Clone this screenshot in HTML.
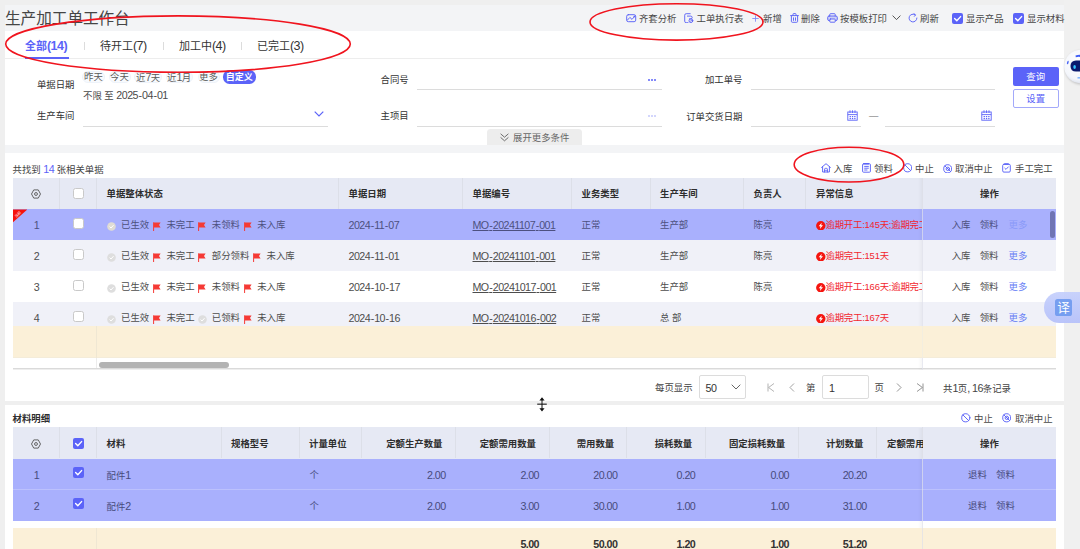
<!DOCTYPE html>
<html lang="zh-CN"><head><meta charset="utf-8"><title>生产加工单工作台</title>
<style>
*{margin:0;padding:0;box-sizing:border-box}
html,body{width:1080px;height:549px;overflow:hidden;background:#efefef}
body{position:relative;font-family:"Liberation Sans","Noto Sans CJK SC",sans-serif;font-size:9.4px;color:#484848}
.b{position:absolute;display:block}
.t{position:absolute;white-space:nowrap;line-height:14px;height:14px}
.t.c{transform:translateX(-50%)}
.bd{font-weight:bold}
.blue{color:#5b63f8}
.red{color:#f2262e}
.l{font-size:1.14em;letter-spacing:-0.56px;position:relative;top:-0.1px}.hy{margin:0 .55px}
.u{text-decoration:underline}
.h{font-weight:bold;color:#2e2e2e}
</style></head>
<body>
<div class="b " style="left:4.5px;top:4.5px;width:1059.5px;height:396.5px;background:#f3f4f6"></div>
<div class="b " style="left:1064px;top:0px;width:16px;height:549px;background:#f0f0f0"></div>
<div class="b " style="left:5px;top:31px;width:1059px;height:114px;background:#fff"></div>
<div class="b " style="left:5px;top:58px;width:1059px;height:1px;background:#ededed"></div>
<div class="b " style="left:5px;top:152.5px;width:1059px;height:248.5px;background:#fff"></div>
<div class="b " style="left:5px;top:405.2px;width:1059px;height:145px;background:#fff"></div>
<span class="t" style="left:5px;top:8px;font-size:15.6px;line-height:22px;height:22px;color:#454545">生产加工单工作台</span>
<span class="t bd blue" style="left:25px;top:39.4px;font-size:11px">全部<span class="l">(14)</span></span>
<div class="b " style="left:25.3px;top:56.6px;width:43.5px;height:2.2px;background:#5b63f8"></div>
<div class="b " style="left:84px;top:42px;width:1px;height:8px;background:#dcdcdc"></div>
<div class="b " style="left:163px;top:42px;width:1px;height:8px;background:#dcdcdc"></div>
<div class="b " style="left:241px;top:42px;width:1px;height:8px;background:#dcdcdc"></div>
<span class="t " style="left:100px;top:39.4px;font-size:11px;color:#333">待开工<span class="l">(7)</span></span>
<span class="t " style="left:179px;top:39.4px;font-size:11px;color:#333">加工中<span class="l">(4)</span></span>
<span class="t " style="left:257px;top:39.4px;font-size:11px;color:#333">已完工<span class="l">(3)</span></span>
<span class="t " style="left:638.9px;top:11.5px;">齐套分析</span>
<span class="t " style="left:696.5px;top:11.5px;">工单执行表</span>
<span class="t " style="left:763px;top:11.5px;">新增</span>
<span class="t " style="left:801px;top:11.5px;">删除</span>
<span class="t " style="left:840px;top:11.5px;">按模板打印</span>
<span class="t " style="left:920px;top:11.5px;">刷新</span>
<span class="t " style="left:966px;top:11.5px;">显示产品</span>
<span class="t " style="left:1027px;top:11.5px;">显示材料</span>
<span class="t " style="right:1005.5px;top:78px;color:#333">单据日期</span>
<span class="t " style="right:1005.5px;top:109px;color:#333">生产车间</span>
<span class="t " style="right:671.3px;top:73px;color:#333">合同号</span>
<span class="t " style="right:671.3px;top:109px;color:#333">主项目</span>
<span class="t " style="right:337.5px;top:73px;color:#333">加工单号</span>
<span class="t " style="right:337.5px;top:110px;color:#333">订单交货日期</span>
<div class="b " style="left:82.2px;top:71.3px;width:23.299999999999997px;height:12px;background:#f8fafd;border:1px solid #eef3fa;border-radius:6px"></div>
<div class="b " style="left:108.8px;top:71.3px;width:22.39999999999999px;height:12px;background:#f8fafd;border:1px solid #eef3fa;border-radius:6px"></div>
<div class="b " style="left:134.4px;top:71.3px;width:27.599999999999994px;height:12px;background:#f8fafd;border:1px solid #eef3fa;border-radius:6px"></div>
<div class="b " style="left:165.5px;top:71.3px;width:27.5px;height:12px;background:#f8fafd;border:1px solid #eef3fa;border-radius:6px"></div>
<div class="b " style="left:197.8px;top:71.3px;width:22.19999999999999px;height:12px;background:#f8fafd;border:1px solid #eef3fa;border-radius:6px"></div>
<span class="t " style="left:84px;top:70px;color:#5a5a5a">昨天</span>
<span class="t " style="left:110px;top:70px;color:#5a5a5a">今天</span>
<span class="t " style="left:136px;top:70px;color:#5a5a5a">近<span class="l">7</span>天</span>
<span class="t " style="left:167px;top:70px;color:#5a5a5a">近<span class="l">1</span>月</span>
<span class="t " style="left:199px;top:70px;color:#5a5a5a">更多</span>
<div class="b " style="left:223px;top:70.4px;width:32.5px;height:13.4px;background:#5b63f8;border-radius:6.5px"></div>
<span class="t c bd" style="left:239.2px;top:70px;color:#fff;font-size:9px">自定义</span>
<span class="t " style="left:83px;top:87.7px;color:#4a4a4a">不限 至 <span class="l">2025<span class="hy">-</span>04<span class="hy">-</span>01</span></span>
<div class="b " style="left:83px;top:126px;width:245px;height:1px;background:#dcdcdc"></div>
<div class="b " style="left:417px;top:89px;width:245px;height:1px;background:#dcdcdc"></div>
<div class="b " style="left:417px;top:126px;width:245px;height:1px;background:#dcdcdc"></div>
<div class="b " style="left:751px;top:89px;width:244px;height:1px;background:#dcdcdc"></div>
<div class="b " style="left:751px;top:126px;width:110px;height:1px;background:#dcdcdc"></div>
<div class="b " style="left:885px;top:126px;width:110px;height:1px;background:#dcdcdc"></div>
<span class="t " style="left:869px;top:109px;color:#666">—</span>
<svg class="b" style="left:314px;top:111px;" width="10" height="6" viewBox="0 0 10 6"><path d="M0.7 0.7 L5 5 L9.3 0.7" fill="none" stroke="#5b63f8" stroke-width="1.2"/></svg>
<div class="b " style="left:648px;top:79px;width:1.6px;height:1.6px;background:#5b63f8;border-radius:1px"></div>
<div class="b " style="left:648px;top:115px;width:1.6px;height:1.6px;background:#c5c9fb;border-radius:1px"></div>
<div class="b " style="left:651px;top:79px;width:1.6px;height:1.6px;background:#5b63f8;border-radius:1px"></div>
<div class="b " style="left:651px;top:115px;width:1.6px;height:1.6px;background:#c5c9fb;border-radius:1px"></div>
<div class="b " style="left:654px;top:79px;width:1.6px;height:1.6px;background:#5b63f8;border-radius:1px"></div>
<div class="b " style="left:654px;top:115px;width:1.6px;height:1.6px;background:#c5c9fb;border-radius:1px"></div>
<div class="b " style="left:1012.5px;top:67px;width:46.5px;height:18.5px;background:#5b63f8;border-radius:2px"></div>
<span class="t c " style="left:1035.7px;top:69.5px;color:#fff">查询</span>
<div class="b " style="left:1012.5px;top:89px;width:46.5px;height:18.5px;background:#fff;border:1px solid #a3a9fa;border-radius:2px"></div>
<span class="t c " style="left:1035.7px;top:91.5px;color:#5b63f8">设置</span>
<div class="b " style="left:487px;top:129px;width:95px;height:16px;background:#ededed;border-radius:3.5px 3.5px 0 0"></div>
<span class="t " style="left:513px;top:131px;color:#666">展开更多条件</span>
<svg class="b" style="left:499.7px;top:133px;" width="9" height="9" viewBox="0 0 9 9"><path d="M0.6 0.8 L4.5 4.2 L8.4 0.8 M0.6 4.4 L4.5 7.8 L8.4 4.4" fill="none" stroke="#666" stroke-width="0.95"/></svg>
<svg class="b" style="left:847px;top:110px;" width="11" height="11" viewBox="0 0 11 11"><g fill="none" stroke="#5b63f8" stroke-width="0.9"><rect x="0.8" y="2" width="9.4" height="8.2"/><path d="M0.8 4.6 H10.2 M3 0.3 V3 M5.5 0.3 V3 M8 0.3 V3"/></g><g fill="#5b63f8"><rect x="2.6" y="6" width="1.3" height="1.2"/><rect x="4.9" y="6" width="1.3" height="1.2"/><rect x="7.2" y="6" width="1.3" height="1.2"/><rect x="2.6" y="8" width="1.3" height="1.2"/><rect x="4.9" y="8" width="1.3" height="1.2"/><rect x="7.2" y="8" width="1.3" height="1.2"/></g></svg>
<svg class="b" style="left:981px;top:110px;" width="11" height="11" viewBox="0 0 11 11"><g fill="none" stroke="#5b63f8" stroke-width="0.9"><rect x="0.8" y="2" width="9.4" height="8.2"/><path d="M0.8 4.6 H10.2 M3 0.3 V3 M5.5 0.3 V3 M8 0.3 V3"/></g><g fill="#5b63f8"><rect x="2.6" y="6" width="1.3" height="1.2"/><rect x="4.9" y="6" width="1.3" height="1.2"/><rect x="7.2" y="6" width="1.3" height="1.2"/><rect x="2.6" y="8" width="1.3" height="1.2"/><rect x="4.9" y="8" width="1.3" height="1.2"/><rect x="7.2" y="8" width="1.3" height="1.2"/></g></svg>
<span class="t " style="left:12.5px;top:162px;color:#444">共找到 <span class="blue"><span class="l">14</span></span> 张相关单据</span>
<span class="t " style="left:833.5px;top:162px;">入库</span>
<span class="t " style="left:874px;top:162px;">领料</span>
<span class="t " style="left:915px;top:162px;">中止</span>
<span class="t " style="left:955px;top:162px;">取消中止</span>
<span class="t " style="left:1015px;top:162px;">手工完工</span>
<div class="b " style="left:13px;top:178px;width:1043px;height:31px;background:#e6e9f4"></div>
<div class="b " style="left:59px;top:178px;width:1px;height:31px;background:#dcdfe8"></div>
<div class="b " style="left:96px;top:178px;width:1px;height:31px;background:#dcdfe8"></div>
<div class="b " style="left:338px;top:178px;width:1px;height:31px;background:#dcdfe8"></div>
<div class="b " style="left:462px;top:178px;width:1px;height:31px;background:#dcdfe8"></div>
<div class="b " style="left:571px;top:178px;width:1px;height:31px;background:#dcdfe8"></div>
<div class="b " style="left:650px;top:178px;width:1px;height:31px;background:#dcdfe8"></div>
<div class="b " style="left:743px;top:178px;width:1px;height:31px;background:#dcdfe8"></div>
<div class="b " style="left:805px;top:178px;width:1px;height:31px;background:#dcdfe8"></div>
<div class="b " style="left:922px;top:178px;width:1px;height:31px;background:#dcdfe8"></div>
<div class="b " style="left:13px;top:209px;width:1043px;height:31px;background:#a9b0fd"></div>
<div class="b " style="left:13px;top:240px;width:1043px;height:31px;background:#f0f1f8"></div>
<div class="b " style="left:13px;top:271px;width:1043px;height:31px;background:#fff"></div>
<div class="b " style="left:13px;top:302px;width:1043px;height:25px;background:#f0f1f8"></div>
<div class="b " style="left:13px;top:326px;width:1043px;height:32px;background:#fbf0d8;"></div>
<div class="b " style="left:96px;top:326px;width:1px;height:43px;background:#ececec"></div>
<div class="b " style="left:13px;top:368.3px;width:1043px;height:1px;background:#dadada"></div>
<div class="b " style="left:13px;top:369.3px;width:1043px;height:1px;background:#eeeeee"></div>
<div class="b " style="left:99px;top:361.5px;width:130px;height:6px;background:#b3b3b3;border-radius:3px"></div>
<div class="b " style="left:918px;top:178px;width:4px;height:192px;background:linear-gradient(90deg,rgba(0,0,0,0),rgba(0,0,0,0.035))"></div>
<div class="b " style="left:922px;top:178px;width:1.3px;height:192px;background:rgba(222,224,234,0.7)"></div>
<div class="b " style="left:1049.5px;top:211px;width:5.5px;height:27px;background:#7075b5;border-radius:3px"></div>
<span class="t h" style="left:106.5px;top:186.5px;">单据整体状态</span>
<span class="t h" style="left:348.5px;top:186.5px;">单据日期</span>
<span class="t h" style="left:472.5px;top:186.5px;">单据编号</span>
<span class="t h" style="left:581.5px;top:186.5px;">业务类型</span>
<span class="t h" style="left:660px;top:186.5px;">生产车间</span>
<span class="t h" style="left:753.5px;top:186.5px;">负责人</span>
<span class="t h" style="left:816px;top:186.5px;">异常信息</span>
<span class="t c h" style="left:989.5px;top:186.5px;">操作</span>
<div class="b " style="left:72.5px;top:188px;width:11px;height:11px;background:#fff;border:1px solid #c9c9c9;border-radius:2.5px"></div>
<svg class="b" style="left:31.299999999999997px;top:189px;" width="10" height="10" viewBox="0 0 10 10"><g fill="none" stroke="#5e5e5e" stroke-width="0.95" stroke-linejoin="round"><path d="M0.5 5 L2.75 0.9 H7.25 L9.5 5 L7.25 9.1 H2.75 Z"/><circle cx="5" cy="5" r="1.45"/></g></svg>
<span class="t c n" style="left:36.5px;top:218.4px;color:#4d5080"><span class="l">1</span></span>
<div class="b " style="left:73px;top:218.4px;width:11px;height:11px;background:#fff;border:1px solid #c9c9c9;border-radius:2.5px"></div>
<svg class="b" style="left:107px;top:221.9px;" width="9" height="9" viewBox="0 0 9 9"><circle cx="4.5" cy="4.5" r="4.3" fill="#e0dcd4"/><path d="M2.6 4.6 L4 6 L6.5 3.2" fill="none" stroke="#fff" stroke-width="1"/></svg>
<span class="t " style="left:121px;top:218.4px;color:#4d5080">已生效</span>
<svg class="b" style="left:152.9px;top:222.3px;" width="8" height="9" viewBox="0 0 8 9"><path d="M0.6 0.3 V9" stroke="#f53a35" stroke-width="1" fill="none"/><path d="M1 0.6 H7.6 L6 3 L7.6 5.4 H1 Z" fill="#f53a35"/></svg>
<span class="t " style="left:166.4px;top:218.4px;color:#4d5080">未完工</span>
<svg class="b" style="left:198.3px;top:222.3px;" width="8" height="9" viewBox="0 0 8 9"><path d="M0.6 0.3 V9" stroke="#f53a35" stroke-width="1" fill="none"/><path d="M1 0.6 H7.6 L6 3 L7.6 5.4 H1 Z" fill="#f53a35"/></svg>
<span class="t " style="left:211.8px;top:218.4px;color:#4d5080">未领料</span>
<svg class="b" style="left:243.70000000000002px;top:222.3px;" width="8" height="9" viewBox="0 0 8 9"><path d="M0.6 0.3 V9" stroke="#f53a35" stroke-width="1" fill="none"/><path d="M1 0.6 H7.6 L6 3 L7.6 5.4 H1 Z" fill="#f53a35"/></svg>
<span class="t " style="left:257.20000000000005px;top:218.4px;color:#4d5080">未入库</span>
<span class="t n" style="left:348.5px;top:218.4px;color:#4d5080"><span class="l">2024<span class="hy">-</span>11<span class="hy">-</span>07</span></span>
<span class="t n u" style="left:472.5px;top:218.4px;color:#4d5080"><span class="l">MO<span class="hy">-</span>20241107<span class="hy">-</span>001</span></span>
<span class="t " style="left:581.5px;top:218.4px;color:#4d5080">正常</span>
<span class="t " style="left:660px;top:218.4px;color:#4d5080">生产部</span>
<span class="t " style="left:753.5px;top:218.4px;color:#4d5080">陈亮</span>
<svg class="b" style="left:816px;top:220.6px;" width="9.6" height="9.6" viewBox="0 0 9.6 9.6"><circle cx="4.8" cy="4.8" r="4.7" fill="#f5150f"/><path d="M5.7 1.7 L2.7 5.3 H4.5 L3.9 8 L7 4.3 H5.2 Z" fill="#fff"/></svg>
<span class="t red" style="left:825.5px;top:218.4px;width:96px;overflow:hidden;letter-spacing:-0.2px">逾期开工:145天;逾期完工:145天</span>
<span class="t " style="left:951.7px;top:218.4px;color:#4d5080">入库</span>
<span class="t " style="left:979.7px;top:218.4px;color:#4d5080">领料</span>
<span class="t " style="left:1008.6px;top:218.4px;color:#8a9af9">更多</span>
<span class="t c n" style="left:36.5px;top:249.39999999999998px;color:#4d4d4d"><span class="l">2</span></span>
<div class="b " style="left:73px;top:249.39999999999998px;width:11px;height:11px;background:#fff;border:1px solid #c9c9c9;border-radius:2.5px"></div>
<svg class="b" style="left:107px;top:252.89999999999998px;" width="9" height="9" viewBox="0 0 9 9"><circle cx="4.5" cy="4.5" r="4.3" fill="#dedede"/><path d="M2.6 4.6 L4 6 L6.5 3.2" fill="none" stroke="#fff" stroke-width="1"/></svg>
<span class="t " style="left:121px;top:249.39999999999998px;color:#4d4d4d">已生效</span>
<svg class="b" style="left:152.9px;top:253.29999999999995px;" width="8" height="9" viewBox="0 0 8 9"><path d="M0.6 0.3 V9" stroke="#f53a35" stroke-width="1" fill="none"/><path d="M1 0.6 H7.6 L6 3 L7.6 5.4 H1 Z" fill="#f53a35"/></svg>
<span class="t " style="left:166.4px;top:249.39999999999998px;color:#4d4d4d">未完工</span>
<svg class="b" style="left:198.3px;top:253.29999999999995px;" width="8" height="9" viewBox="0 0 8 9"><path d="M0.6 0.3 V9" stroke="#f53a35" stroke-width="1" fill="none"/><path d="M1 0.6 H7.6 L6 3 L7.6 5.4 H1 Z" fill="#f53a35"/></svg>
<span class="t " style="left:211.8px;top:249.39999999999998px;color:#4d4d4d">部分领料</span>
<svg class="b" style="left:253.10000000000002px;top:253.29999999999995px;" width="8" height="9" viewBox="0 0 8 9"><path d="M0.6 0.3 V9" stroke="#f53a35" stroke-width="1" fill="none"/><path d="M1 0.6 H7.6 L6 3 L7.6 5.4 H1 Z" fill="#f53a35"/></svg>
<span class="t " style="left:266.6px;top:249.39999999999998px;color:#4d4d4d">未入库</span>
<span class="t n" style="left:348.5px;top:249.39999999999998px;color:#4d4d4d"><span class="l">2024<span class="hy">-</span>11<span class="hy">-</span>01</span></span>
<span class="t n u" style="left:472.5px;top:249.39999999999998px;color:#4d4d4d"><span class="l">MO<span class="hy">-</span>20241101<span class="hy">-</span>001</span></span>
<span class="t " style="left:581.5px;top:249.39999999999998px;color:#4d4d4d">正常</span>
<span class="t " style="left:660px;top:249.39999999999998px;color:#4d4d4d">生产部</span>
<span class="t " style="left:753.5px;top:249.39999999999998px;color:#4d4d4d">陈亮</span>
<svg class="b" style="left:816px;top:251.59999999999997px;" width="9.6" height="9.6" viewBox="0 0 9.6 9.6"><circle cx="4.8" cy="4.8" r="4.7" fill="#f5150f"/><path d="M5.7 1.7 L2.7 5.3 H4.5 L3.9 8 L7 4.3 H5.2 Z" fill="#fff"/></svg>
<span class="t red" style="left:825.5px;top:249.39999999999998px;width:96px;overflow:hidden;letter-spacing:-0.2px">逾期完工:151天</span>
<span class="t " style="left:951.7px;top:249.39999999999998px;color:#4d4d4d">入库</span>
<span class="t " style="left:979.7px;top:249.39999999999998px;color:#4d4d4d">领料</span>
<span class="t " style="left:1008.6px;top:249.39999999999998px;color:#6880f5">更多</span>
<span class="t c n" style="left:36.5px;top:280.4px;color:#4d4d4d"><span class="l">3</span></span>
<div class="b " style="left:73px;top:280.4px;width:11px;height:11px;background:#fff;border:1px solid #c9c9c9;border-radius:2.5px"></div>
<svg class="b" style="left:107px;top:283.9px;" width="9" height="9" viewBox="0 0 9 9"><circle cx="4.5" cy="4.5" r="4.3" fill="#dedede"/><path d="M2.6 4.6 L4 6 L6.5 3.2" fill="none" stroke="#fff" stroke-width="1"/></svg>
<span class="t " style="left:121px;top:280.4px;color:#4d4d4d">已生效</span>
<svg class="b" style="left:152.9px;top:284.29999999999995px;" width="8" height="9" viewBox="0 0 8 9"><path d="M0.6 0.3 V9" stroke="#f53a35" stroke-width="1" fill="none"/><path d="M1 0.6 H7.6 L6 3 L7.6 5.4 H1 Z" fill="#f53a35"/></svg>
<span class="t " style="left:166.4px;top:280.4px;color:#4d4d4d">未完工</span>
<svg class="b" style="left:198.3px;top:284.29999999999995px;" width="8" height="9" viewBox="0 0 8 9"><path d="M0.6 0.3 V9" stroke="#f53a35" stroke-width="1" fill="none"/><path d="M1 0.6 H7.6 L6 3 L7.6 5.4 H1 Z" fill="#f53a35"/></svg>
<span class="t " style="left:211.8px;top:280.4px;color:#4d4d4d">未领料</span>
<svg class="b" style="left:243.70000000000002px;top:284.29999999999995px;" width="8" height="9" viewBox="0 0 8 9"><path d="M0.6 0.3 V9" stroke="#f53a35" stroke-width="1" fill="none"/><path d="M1 0.6 H7.6 L6 3 L7.6 5.4 H1 Z" fill="#f53a35"/></svg>
<span class="t " style="left:257.20000000000005px;top:280.4px;color:#4d4d4d">未入库</span>
<span class="t n" style="left:348.5px;top:280.4px;color:#4d4d4d"><span class="l">2024<span class="hy">-</span>10<span class="hy">-</span>17</span></span>
<span class="t n u" style="left:472.5px;top:280.4px;color:#4d4d4d"><span class="l">MO<span class="hy">-</span>20241017<span class="hy">-</span>001</span></span>
<span class="t " style="left:581.5px;top:280.4px;color:#4d4d4d">正常</span>
<span class="t " style="left:660px;top:280.4px;color:#4d4d4d">生产部</span>
<span class="t " style="left:753.5px;top:280.4px;color:#4d4d4d">陈亮</span>
<svg class="b" style="left:816px;top:282.59999999999997px;" width="9.6" height="9.6" viewBox="0 0 9.6 9.6"><circle cx="4.8" cy="4.8" r="4.7" fill="#f5150f"/><path d="M5.7 1.7 L2.7 5.3 H4.5 L3.9 8 L7 4.3 H5.2 Z" fill="#fff"/></svg>
<span class="t red" style="left:825.5px;top:280.4px;width:96px;overflow:hidden;letter-spacing:-0.2px">逾期开工:166天;逾期完工:166天</span>
<span class="t " style="left:951.7px;top:280.4px;color:#4d4d4d">入库</span>
<span class="t " style="left:979.7px;top:280.4px;color:#4d4d4d">领料</span>
<span class="t " style="left:1008.6px;top:280.4px;color:#6880f5">更多</span>
<span class="t c n" style="left:36.5px;top:311.4px;color:#4d4d4d"><span class="l">4</span></span>
<div class="b " style="left:73px;top:311.4px;width:11px;height:11px;background:#fff;border:1px solid #c9c9c9;border-radius:2.5px"></div>
<svg class="b" style="left:107px;top:314.9px;" width="9" height="9" viewBox="0 0 9 9"><circle cx="4.5" cy="4.5" r="4.3" fill="#dedede"/><path d="M2.6 4.6 L4 6 L6.5 3.2" fill="none" stroke="#fff" stroke-width="1"/></svg>
<span class="t " style="left:121px;top:311.4px;color:#4d4d4d">已生效</span>
<svg class="b" style="left:152.9px;top:315.29999999999995px;" width="8" height="9" viewBox="0 0 8 9"><path d="M0.6 0.3 V9" stroke="#f53a35" stroke-width="1" fill="none"/><path d="M1 0.6 H7.6 L6 3 L7.6 5.4 H1 Z" fill="#f53a35"/></svg>
<span class="t " style="left:166.4px;top:311.4px;color:#4d4d4d">未完工</span>
<svg class="b" style="left:197.8px;top:314.9px;" width="9" height="9" viewBox="0 0 9 9"><circle cx="4.5" cy="4.5" r="4.3" fill="#dedede"/><path d="M2.6 4.6 L4 6 L6.5 3.2" fill="none" stroke="#fff" stroke-width="1"/></svg>
<span class="t " style="left:211.8px;top:311.4px;color:#4d4d4d">已领料</span>
<svg class="b" style="left:243.70000000000002px;top:315.29999999999995px;" width="8" height="9" viewBox="0 0 8 9"><path d="M0.6 0.3 V9" stroke="#f53a35" stroke-width="1" fill="none"/><path d="M1 0.6 H7.6 L6 3 L7.6 5.4 H1 Z" fill="#f53a35"/></svg>
<span class="t " style="left:257.20000000000005px;top:311.4px;color:#4d4d4d">未入库</span>
<span class="t n" style="left:348.5px;top:311.4px;color:#4d4d4d"><span class="l">2024<span class="hy">-</span>10<span class="hy">-</span>16</span></span>
<span class="t n u" style="left:472.5px;top:311.4px;color:#4d4d4d"><span class="l">MO<span class="hy">-</span>20241016<span class="hy">-</span>002</span></span>
<span class="t " style="left:581.5px;top:311.4px;color:#4d4d4d">正常</span>
<span class="t " style="left:660px;top:311.4px;color:#4d4d4d">总 部</span>
<span class="t " style="left:753.5px;top:311.4px;color:#4d4d4d"></span>
<svg class="b" style="left:816px;top:313.59999999999997px;" width="9.6" height="9.6" viewBox="0 0 9.6 9.6"><circle cx="4.8" cy="4.8" r="4.7" fill="#f5150f"/><path d="M5.7 1.7 L2.7 5.3 H4.5 L3.9 8 L7 4.3 H5.2 Z" fill="#fff"/></svg>
<span class="t red" style="left:825.5px;top:311.4px;width:96px;overflow:hidden;letter-spacing:-0.2px">逾期完工:167天</span>
<span class="t " style="left:951.7px;top:311.4px;color:#4d4d4d">入库</span>
<span class="t " style="left:979.7px;top:311.4px;color:#4d4d4d">领料</span>
<span class="t " style="left:1008.6px;top:311.4px;color:#6880f5">更多</span>
<div class="b " style="left:13px;top:326px;width:1043px;height:32px;background:#fbf0d8;border-bottom:1px solid #f4ecd9"></div>
<div class="b " style="left:96px;top:326px;width:1px;height:32px;background:#efe7d3"></div>
<div class="b " style="left:922px;top:326px;width:1.3px;height:32px;background:rgba(240,236,226,0.7)"></div>
<svg class="b" style="left:13px;top:209px;" width="14" height="14" viewBox="0 0 14 14"><path d="M0 0.5 H14.2 L0 13.2 Z" fill="#f5120c"/><text x="1" y="6.5" font-size="3.6" fill="#fff" transform="rotate(-45 5 5)" font-family="Liberation Sans,Noto Sans CJK SC,sans-serif">当前</text></svg>
<span class="t " style="left:655px;top:380.6px;color:#444">每页显示</span>
<div class="b " style="left:699px;top:375px;width:46.5px;height:24px;background:#fff;border:1px solid #dcdcdc;border-radius:2px"></div>
<span class="t n" style="left:705.5px;top:380.6px;color:#333"><span class="l">50</span></span>
<svg class="b" style="left:731px;top:384px;" width="10" height="6" viewBox="0 0 10 6"><path d="M0.7 0.7 L5 5 L9.3 0.7" fill="none" stroke="#555" stroke-width="0.9"/></svg>
<svg class="b" style="left:767px;top:382.5px;" width="8" height="9" viewBox="0 0 8 9"><path d="M1 0.5 V8.5 M7 0.5 L1.6 4.5 L7 8.5" fill="none" stroke="#aaa" stroke-width="0.9"/></svg>
<svg class="b" style="left:789px;top:382.5px;" width="6" height="9" viewBox="0 0 6 9"><path d="M5 0.5 L1 4.5 L5 8.5" fill="none" stroke="#999" stroke-width="0.9"/></svg>
<span class="t " style="left:806px;top:380.6px;color:#444">第</span>
<div class="b " style="left:822px;top:375px;width:46.5px;height:24px;background:#fff;border:1px solid #dcdcdc;border-radius:2px"></div>
<span class="t n" style="left:829px;top:380.6px;color:#333"><span class="l">1</span></span>
<span class="t " style="left:874.5px;top:380.6px;color:#444">页</span>
<svg class="b" style="left:896px;top:382.5px;" width="6" height="9" viewBox="0 0 6 9"><path d="M1 0.5 L5 4.5 L1 8.5" fill="none" stroke="#888" stroke-width="0.9"/></svg>
<svg class="b" style="left:915.5px;top:382.5px;" width="8" height="9" viewBox="0 0 8 9"><path d="M7 0.5 V8.5 M1 0.5 L6.4 4.5 L1 8.5" fill="none" stroke="#888" stroke-width="0.9"/></svg>
<span class="t " style="left:943px;top:380.6px;color:#444">共<span class="l">1</span>页<span class="l">, 16</span>条记录</span>
<span class="t h" style="left:12.5px;top:411.5px;">材料明细</span>
<span class="t " style="left:974px;top:411.7px;">中止</span>
<span class="t " style="left:1015px;top:411.7px;">取消中止</span>
<div class="b " style="left:13px;top:427.2px;width:1043px;height:32.3px;background:#e6e9f4"></div>
<div class="b " style="left:59px;top:427.2px;width:1px;height:31.3px;background:#dcdfe8"></div>
<div class="b " style="left:96px;top:427.2px;width:1px;height:31.3px;background:#dcdfe8"></div>
<div class="b " style="left:221.2px;top:427.2px;width:1px;height:31.3px;background:#dcdfe8"></div>
<div class="b " style="left:299px;top:427.2px;width:1px;height:31.3px;background:#dcdfe8"></div>
<div class="b " style="left:361px;top:427.2px;width:1px;height:31.3px;background:#dcdfe8"></div>
<div class="b " style="left:455px;top:427.2px;width:1px;height:31.3px;background:#dcdfe8"></div>
<div class="b " style="left:549px;top:427.2px;width:1px;height:31.3px;background:#dcdfe8"></div>
<div class="b " style="left:626px;top:427.2px;width:1px;height:31.3px;background:#dcdfe8"></div>
<div class="b " style="left:704.5px;top:427.2px;width:1px;height:31.3px;background:#dcdfe8"></div>
<div class="b " style="left:798px;top:427.2px;width:1px;height:31.3px;background:#dcdfe8"></div>
<div class="b " style="left:876px;top:427.2px;width:1px;height:31.3px;background:#dcdfe8"></div>
<div class="b " style="left:922px;top:427.2px;width:1px;height:31.3px;background:#dcdfe8"></div>
<div class="b " style="left:13px;top:458.5px;width:1043px;height:32px;background:#a9b0fd"></div>
<div class="b " style="left:13px;top:489.5px;width:1043px;height:31px;background:#a9b0fd"></div>
<div class="b " style="left:13px;top:489px;width:1043px;height:1px;background:#bcc1fd"></div>
<div class="b " style="left:13px;top:527.5px;width:1043px;height:22px;background:#fbf0d8;"></div>
<div class="b " style="left:96px;top:527.5px;width:1px;height:22px;background:#efe7d3"></div>
<div class="b " style="left:918px;top:427.5px;width:4px;height:100px;background:linear-gradient(90deg,rgba(0,0,0,0),rgba(0,0,0,0.035))"></div>
<div class="b " style="left:922px;top:427.5px;width:1.3px;height:122px;background:rgba(222,224,234,0.7)"></div>
<svg class="b" style="left:31.299999999999997px;top:438.8px;" width="10" height="10" viewBox="0 0 10 10"><g fill="none" stroke="#5e5e5e" stroke-width="0.95" stroke-linejoin="round"><path d="M0.5 5 L2.75 0.9 H7.25 L9.5 5 L7.25 9.1 H2.75 Z"/><circle cx="5" cy="5" r="1.45"/></g></svg>
<svg class="b" style="left:72.5px;top:438px;" width="11" height="11" viewBox="0 0 11 11"><rect x="0" y="0" width="11" height="11" rx="2" fill="#5b63f8"/><path d="M2.6 5.6 L4.8 7.8 L8.6 3.6" fill="none" stroke="#fff" stroke-width="1.4" stroke-linecap="round" stroke-linejoin="round"/></svg>
<span class="t h" style="left:106.5px;top:436.7px;">材料</span>
<span class="t h" style="left:231px;top:436.7px;">规格型号</span>
<span class="t h" style="left:309px;top:436.7px;">计量单位</span>
<span class="t h" style="right:637.5px;top:436.7px;">定额生产数量</span>
<span class="t h" style="right:544px;top:436.7px;">定额需用数量</span>
<span class="t h" style="right:465.79999999999995px;top:436.7px;">需用数量</span>
<span class="t h" style="right:387.79999999999995px;top:436.7px;">损耗数量</span>
<span class="t h" style="right:294.79999999999995px;top:436.7px;">固定损耗数量</span>
<span class="t h" style="right:216.60000000000002px;top:436.7px;">计划数量</span>
<span class="t h" style="left:887px;top:436.7px;width:35.5px;overflow:hidden">定额需用数量</span>
<span class="t c h" style="left:989.5px;top:436.7px;">操作</span>
<span class="t c n" style="left:36.5px;top:467.8px;color:#474b7c"><span class="l">1</span></span>
<svg class="b" style="left:73px;top:466.8px;" width="11" height="11" viewBox="0 0 11 11"><rect x="0" y="0" width="11" height="11" rx="2" fill="#5b63f8"/><path d="M2.6 5.6 L4.8 7.8 L8.6 3.6" fill="none" stroke="#fff" stroke-width="1.4" stroke-linecap="round" stroke-linejoin="round"/></svg>
<span class="t " style="left:106.5px;top:467.8px;color:#474b7c">配件<span class="l">1</span></span>
<span class="t " style="left:309.5px;top:467.8px;color:#474b7c">个</span>
<span class="t n" style="right:634.4px;top:467.8px;color:#474b7c"><span class="l">2.00</span></span>
<span class="t n" style="right:541px;top:467.8px;color:#474b7c"><span class="l">2.00</span></span>
<span class="t n" style="right:462.70000000000005px;top:467.8px;color:#474b7c"><span class="l">20.00</span></span>
<span class="t n" style="right:384.79999999999995px;top:467.8px;color:#474b7c"><span class="l">0.20</span></span>
<span class="t n" style="right:291px;top:467.8px;color:#474b7c"><span class="l">0.00</span></span>
<span class="t n" style="right:213.29999999999995px;top:467.8px;color:#474b7c"><span class="l">20.20</span></span>
<span class="t " style="left:968px;top:467.8px;color:#474b7c">退料</span>
<span class="t " style="left:996px;top:467.8px;color:#474b7c">领料</span>
<span class="t c n" style="left:36.5px;top:498.8px;color:#474b7c"><span class="l">2</span></span>
<svg class="b" style="left:73px;top:497.8px;" width="11" height="11" viewBox="0 0 11 11"><rect x="0" y="0" width="11" height="11" rx="2" fill="#5b63f8"/><path d="M2.6 5.6 L4.8 7.8 L8.6 3.6" fill="none" stroke="#fff" stroke-width="1.4" stroke-linecap="round" stroke-linejoin="round"/></svg>
<span class="t " style="left:106.5px;top:498.8px;color:#474b7c">配件<span class="l">2</span></span>
<span class="t " style="left:309.5px;top:498.8px;color:#474b7c">个</span>
<span class="t n" style="right:634.4px;top:498.8px;color:#474b7c"><span class="l">2.00</span></span>
<span class="t n" style="right:541px;top:498.8px;color:#474b7c"><span class="l">3.00</span></span>
<span class="t n" style="right:462.70000000000005px;top:498.8px;color:#474b7c"><span class="l">30.00</span></span>
<span class="t n" style="right:384.79999999999995px;top:498.8px;color:#474b7c"><span class="l">1.00</span></span>
<span class="t n" style="right:291px;top:498.8px;color:#474b7c"><span class="l">1.00</span></span>
<span class="t n" style="right:213.29999999999995px;top:498.8px;color:#474b7c"><span class="l">31.00</span></span>
<span class="t " style="left:968px;top:498.8px;color:#474b7c">退料</span>
<span class="t " style="left:996px;top:498.8px;color:#474b7c">领料</span>
<span class="t n bd" style="right:541px;top:537.5px;color:#333"><span class="l">5.00</span></span>
<span class="t n bd" style="right:462.70000000000005px;top:537.5px;color:#333"><span class="l">50.00</span></span>
<span class="t n bd" style="right:384.79999999999995px;top:537.5px;color:#333"><span class="l">1.20</span></span>
<span class="t n bd" style="right:291px;top:537.5px;color:#333"><span class="l">1.00</span></span>
<span class="t n bd" style="right:213.29999999999995px;top:537.5px;color:#333"><span class="l">51.20</span></span>
<svg class="b" style="left:626.3px;top:13.6px;" width="10.5" height="9" viewBox="0 0 10.5 9"><g fill="none" stroke="#5b63f8" stroke-width="0.95" stroke-linecap="round" stroke-linejoin="round"><rect x="0.7" y="0.7" width="9" height="7" rx="1.6"/><path d="M1.5 6 L3.9 3.4 L6 5.4 L8.6 2.4"/><circle cx="8.3" cy="2.5" r="0.5"/></g></svg>
<svg class="b" style="left:684px;top:12.8px;" width="10" height="10.4" viewBox="0 0 10 10.4"><g fill="none" stroke="#5b63f8" stroke-width="0.95" stroke-linecap="round" stroke-linejoin="round"><path d="M6.2 0.7 H2.2 Q0.7 0.7 0.7 2.2 V8.2 Q0.7 9.7 2.2 9.7 H4"/><path d="M3.4 3.1 H6.6 Q8.2 3.1 8.2 4.6 Q8.2 5.9 6.6 5.9 H5.4"/><circle cx="6.9" cy="7.7" r="1.9"/><path d="M6.2 7.7 L6.8 8.3 L7.8 7.1" stroke-width="0.7"/></g></svg>
<svg class="b" style="left:751.5px;top:15.2px;" width="7" height="7" viewBox="0 0 7 7"><path d="M0.3 3.5 H6.7 M3.5 0.3 V6.7" fill="none" stroke="#7d84f9" stroke-width="0.85"/></svg>
<svg class="b" style="left:789.5px;top:13px;" width="9" height="10" viewBox="0 0 9 10"><g fill="none" stroke="#5b63f8" stroke-width="0.95" stroke-linecap="round" stroke-linejoin="round"><path d="M0.6 2.6 H8.4 M3 2.4 V1.2 Q3 0.6 3.6 0.6 H5.4 Q6 0.6 6 1.2 V2.4"/><path d="M1.4 2.8 V8.4 Q1.4 9.3 2.3 9.3 H6.7 Q7.6 9.3 7.6 8.4 V2.8"/><path d="M3.5 4.8 V7.4 M5.5 4.8 V7.4"/></g></svg>
<svg class="b" style="left:826.5px;top:13.2px;" width="11" height="10" viewBox="0 0 11 10"><g fill="none" stroke="#5b63f8" stroke-width="0.95" stroke-linecap="round" stroke-linejoin="round"><path d="M2.8 3 V1.4 Q2.8 0.7 3.5 0.7 H7.5 Q8.2 0.7 8.2 1.4 V3"/><rect x="0.7" y="3" width="9.6" height="4.6" rx="1.4" fill="#5b63f8" fill-opacity="0.25"/><rect x="2.8" y="6" width="5.4" height="3.2" rx="0.6" fill="#f2f3f5"/></g></svg>
<svg class="b" style="left:892px;top:15px;" width="9" height="5.5" viewBox="0 0 9 5.5"><path d="M0.6 0.6 L4.5 4.6 L8.4 0.6" fill="none" stroke="#555" stroke-width="1"/></svg>
<svg class="b" style="left:907.8px;top:13px;" width="10" height="10" viewBox="0 0 10 10"><g fill="none" stroke="#5b63f8" stroke-width="0.95" stroke-linecap="round" stroke-linejoin="round" stroke-width="1.05"><path d="M8.9 5 A3.9 3.9 0 1 1 7.2 1.8"/><path d="M5.9 0.6 L7.6 1.9 L6.3 3.4" stroke-width="0.9"/></g></svg>
<svg class="b" style="left:952px;top:12.5px;" width="11" height="11" viewBox="0 0 11 11"><rect x="0" y="0" width="11" height="11" rx="2" fill="#5b63f8"/><path d="M2.6 5.6 L4.8 7.8 L8.6 3.6" fill="none" stroke="#fff" stroke-width="1.4" stroke-linecap="round" stroke-linejoin="round"/></svg>
<svg class="b" style="left:1013px;top:12.5px;" width="11" height="11" viewBox="0 0 11 11"><rect x="0" y="0" width="11" height="11" rx="2" fill="#5b63f8"/><path d="M2.6 5.6 L4.8 7.8 L8.6 3.6" fill="none" stroke="#fff" stroke-width="1.4" stroke-linecap="round" stroke-linejoin="round"/></svg>
<svg class="b" style="left:821px;top:163px;" width="10" height="10" viewBox="0 0 10 10"><g fill="none" stroke="#5b63f8" stroke-width="0.95" stroke-linecap="round" stroke-linejoin="round" stroke-width="0.9"><path d="M0.6 4.4 L5 0.7 L9.4 4.4"/><path d="M1.6 3.8 V9 H8.4 V3.8"/><path d="M3.6 9 V6.2 Q3.6 5.4 4.4 5.4 H5.6 Q6.4 5.4 6.4 6.2 V9"/><path d="M3.8 7.4 H6.2" stroke-width="0.7"/></g></svg>
<svg class="b" style="left:862px;top:163.3px;" width="9" height="10" viewBox="0 0 9 10"><g fill="none" stroke="#5b63f8" stroke-width="0.95" stroke-linecap="round" stroke-linejoin="round" stroke-width="0.9"><rect x="0.6" y="0.8" width="7.8" height="8.4" rx="0.8"/><path d="M2.4 0.8 H6.6" stroke-width="1.4"/><path d="M2.6 3.4 H6.4 M2.6 5.2 H6.4 M2.6 7 H5"/></g></svg>
<svg class="b" style="left:902.8px;top:163.4px;" width="9.6" height="9.6" viewBox="0 0 9.6 9.6"><g fill="none" stroke="#5b63f8" stroke-width="0.95" stroke-linecap="round" stroke-linejoin="round" stroke-width="0.95"><circle cx="4.8" cy="4.8" r="4.1"/><path d="M1.9 1.9 L7.7 7.7"/></g></svg>
<svg class="b" style="left:942.6px;top:163.5px;" width="9.6" height="9.6" viewBox="0 0 9.6 9.6"><g fill="none" stroke="#5b63f8" stroke-width="0.95" stroke-linecap="round" stroke-linejoin="round" stroke-width="0.95"><circle cx="4.8" cy="4.8" r="4.1"/><path d="M1.9 1.9 L7.7 7.7"/><circle cx="4.8" cy="4.8" r="1.7"/></g></svg>
<svg class="b" style="left:1002.3px;top:163.2px;" width="9" height="10" viewBox="0 0 9 10"><g fill="none" stroke="#5b63f8" stroke-width="0.95" stroke-linecap="round" stroke-linejoin="round" stroke-width="0.9"><rect x="0.7" y="1.3" width="7.6" height="7.8" rx="1.2"/><path d="M2.8 1 H6.2" stroke-width="1.5"/><path d="M2.8 5.2 L4 6.4 L6.3 3.9"/></g></svg>
<svg class="b" style="left:961.2px;top:413.4px;" width="9.6" height="9.6" viewBox="0 0 9.6 9.6"><g fill="none" stroke="#5b63f8" stroke-width="0.95" stroke-linecap="round" stroke-linejoin="round" stroke-width="0.95"><circle cx="4.8" cy="4.8" r="4.1"/><path d="M1.9 1.9 L7.7 7.7"/></g></svg>
<svg class="b" style="left:1001.6px;top:413.4px;" width="9.6" height="9.6" viewBox="0 0 9.6 9.6"><g fill="none" stroke="#5b63f8" stroke-width="0.95" stroke-linecap="round" stroke-linejoin="round" stroke-width="0.95"><circle cx="4.8" cy="4.8" r="4.1"/><path d="M1.9 1.9 L7.7 7.7"/><circle cx="4.8" cy="4.8" r="1.7"/></g></svg>
<svg class="b" style="left:0;top:0" width="1080" height="549" viewBox="0 0 1080 549"><g fill="none" stroke="#f0141e" stroke-width="1.6"><ellipse cx="178" cy="44.1" rx="172.3" ry="28.2"/><ellipse cx="676.5" cy="21.9" rx="86.5" ry="18.2"/><ellipse cx="849" cy="164.6" rx="54.8" ry="17.4"/></g></svg>
<svg class="b" style="left:1056px;top:44px" width="24" height="46" viewBox="1056 44 24 46"><defs><radialGradient id="rg" cx="0.45" cy="0.4" r="0.6"><stop offset="0" stop-color="#fff"/><stop offset="0.8" stop-color="#f4f6fb"/><stop offset="1" stop-color="#dfe3ee"/></radialGradient><filter id="sh" x="-30%" y="-30%" width="160%" height="160%"><feGaussianBlur stdDeviation="1.2"/></filter></defs><circle cx="1081.5" cy="67.5" r="17" fill="#000" fill-opacity="0.18" filter="url(#sh)"/><circle cx="1081" cy="66.5" r="16.8" fill="url(#rg)"/><path d="M1070.5 66 Q1070.5 61 1076 60.6 H1081 V71.6 H1076 Q1070.5 71.6 1070.5 66 Z" fill="#0b1a6e"/><ellipse cx="1074.6" cy="67" rx="1.3" ry="2" fill="#35c6ff"/><path d="M1075.5 55.6 Q1078 54.6 1081 54.8 V57 Q1078 56.6 1075.8 57.2 Z" fill="#3d5cf5"/><ellipse cx="1067.8" cy="62.6" rx="0.8" ry="1.8" fill="#4a66f5" transform="rotate(15 1067.8 62.6)"/><rect x="1077.5" y="77" width="3.5" height="1.6" fill="#6aa8ff" opacity="0.8"/></svg>
<div class="b " style="left:1044px;top:291.7px;width:60px;height:31.2px;background:linear-gradient(180deg,rgba(196,207,252,0.92),rgba(182,193,250,0.95));border-radius:15.6px"></div>
<div class="b " style="left:1055px;top:299px;width:17px;height:16.8px;background:#769ef0;border-radius:2.6px"></div>
<span class="t c" style="left:1063.5px;top:300.8px;color:#fff;font-size:12.6px;line-height:15px;height:15px">译</span>
<svg class="b" style="left:535px;top:396px;" width="14" height="17" viewBox="0 0 14 17"><g stroke="#fff" stroke-width="2.2" stroke-opacity="0.85" fill="#fff" stroke-linejoin="round"><path d="M7 1.2 L9.6 4.6 H4.4 Z M7 15.6 L9.6 12.2 H4.4 Z"/><path d="M7 3 V14" fill="none"/><path d="M2.2 8.2 H11.8" fill="none"/></g><g fill="#111"><path d="M7 1.2 L9.6 4.6 H4.4 Z M7 15.6 L9.6 12.2 H4.4 Z"/><rect x="6.5" y="3" width="1" height="11"/><rect x="2.2" y="7.6" width="9.6" height="1.1"/></g></svg>
</body></html>
